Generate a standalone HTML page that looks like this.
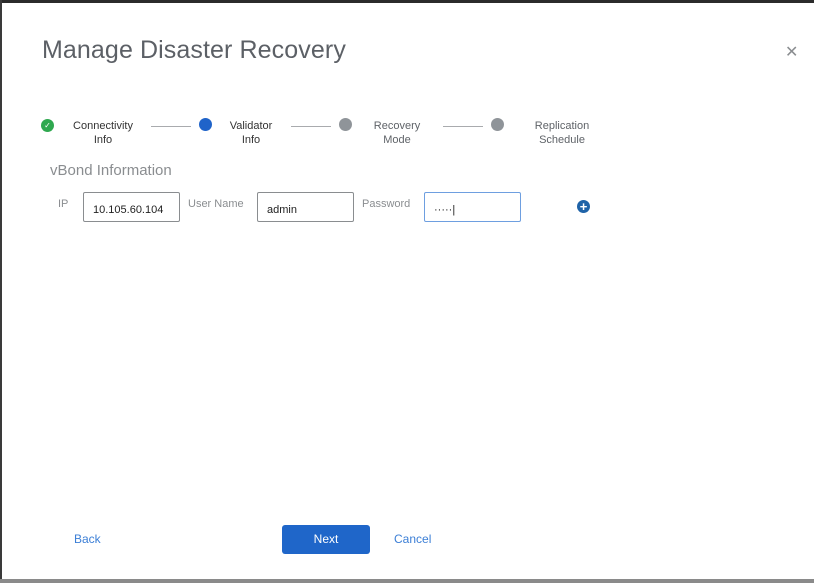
<!DOCTYPE html>
<html><head><style>
body{margin:0;width:814px;height:583px;overflow:hidden;background:#fff;font-family:"Liberation Sans",sans-serif;position:relative}
.a{position:absolute}
.lbl{font-size:11px;color:#5f6368;text-align:center;line-height:14px}
.line{position:absolute;height:1px;background:#a9abae}
.dot{position:absolute;width:13px;height:13px;border-radius:50%}
.inp{position:absolute;height:30px;border:1px solid #8a8d90;box-sizing:border-box;font-size:11px;color:#222;padding:11px 0 0 9px;border-radius:2px}
</style></head><body>
<div class="a" style="left:0;top:0;width:814px;height:3px;background:#2b2b2b"></div>
<div class="a" style="left:0;top:0;width:2px;height:583px;background:#3a3a3a"></div>
<div class="a" style="left:0;top:579px;width:814px;height:4px;background:#8a8a8a"></div>
<div class="a" style="left:42px;top:36px;font-size:25px;color:#5c6066;letter-spacing:0.1px">Manage Disaster Recovery</div>
<div class="a" style="left:785px;top:42px;font-size:16px;color:#8a8d90">✕</div>
<div class="dot" style="left:41px;top:119px;background:#2fa84f;color:#fff;font-size:8px;text-align:center;line-height:13px">✓</div>
<div class="a lbl" style="left:65px;top:119px;width:76px;color:#333">Connectivity<br>Info</div>
<div class="line" style="left:151px;top:126px;width:40px"></div>
<div class="dot" style="left:199px;top:118px;background:#1f63c9"></div>
<div class="a lbl" style="left:222px;top:119px;width:58px;color:#333">Validator<br>Info</div>
<div class="line" style="left:291px;top:126px;width:40px"></div>
<div class="dot" style="left:339px;top:118px;background:#8f9499"></div>
<div class="a lbl" style="left:367px;top:119px;width:60px">Recovery<br>Mode</div>
<div class="line" style="left:443px;top:126px;width:40px"></div>
<div class="dot" style="left:491px;top:118px;background:#8f9499"></div>
<div class="a lbl" style="left:526px;top:119px;width:72px">Replication<br>Schedule</div>
<div class="a" style="left:50px;top:162px;font-size:15px;color:#8a8d90">vBond Information</div>
<div class="a" style="left:58px;top:198px;font-size:11px;color:#8a8d90">IP</div>
<div class="inp" style="left:83px;top:192px;width:97px">10.105.60.104</div>
<div class="a" style="left:188px;top:198px;font-size:11px;color:#8a8d90">User Name</div>
<div class="inp" style="left:257px;top:192px;width:97px">admin</div>
<div class="a" style="left:362px;top:198px;font-size:11px;color:#8a8d90">Password</div>
<div class="inp" style="left:424px;top:192px;width:97px;border-color:#6e9fe0">·····|</div>
<div class="a" style="left:577px;top:200px;width:13px;height:13px;border-radius:50%;background:#1f63a8;color:#fff;font-size:13px;font-weight:bold;line-height:13px;text-align:center">+</div>
<div class="a" style="left:74px;top:532px;font-size:12px;color:#3c7fd6">Back</div>
<div class="a" style="left:282px;top:525px;width:88px;height:29px;background:#1f66c9;border-radius:3px;color:#fff;font-size:12px;text-align:center;line-height:29px">Next</div>
<div class="a" style="left:394px;top:532px;font-size:12px;color:#3c7fd6">Cancel</div>
</body></html>
